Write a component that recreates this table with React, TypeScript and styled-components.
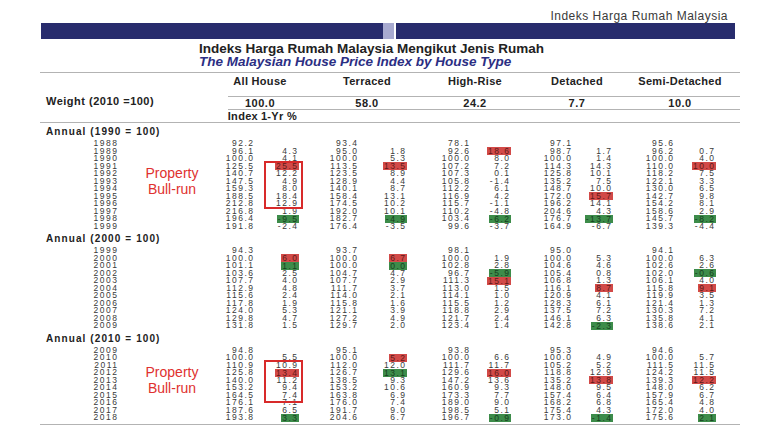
import React from 'react'
import styled, { createGlobalStyle } from 'styled-components'

const GlobalStyle = createGlobalStyle`
  * { box-sizing: border-box; }
  html, body { margin: 0; padding: 0; background: #fff; }
  body { font-family: "Liberation Sans", Arial, sans-serif; color: #2b2b2b; }
`

// data grid: year | (index, 1-yr %) x 5 | filler
const COLS = '77px 136px 44px 60px 48px 64px 40px 62px 40px 62px 41px 26px'
// header grid: label | one column per house type, centred over its pair
const HEAD_COLS = '167px 106px 108px 108px 96px 110px 5px'
const ROW_H = 7.5

const Page = styled.div`
  width: 760px;
  height: 428px;
  overflow: hidden;
  background: #fff;
`

const Caption = styled.div`
  padding: 10px 32px 0 0;
  height: 23px;
  line-height: 13px;
  text-align: right;
  font-size: 12px;
  letter-spacing: 0.5px;
  color: #3a3a3a;
`

const Banner = styled.div`
  display: flex;
  height: 16px;
  margin: 0 25px 0 41px;
`

const tones = { navy: '#282c6d', lilac: '#a8aad0', gap: '#ffffff' }

const BannerBlock = styled.div<{ $w?: number; $tone: keyof typeof tones }>`
  flex: ${p => (p.$w ? `0 0 ${p.$w}px` : '1')};
  background: ${p => tones[p.$tone]};
`

const TitleBlock = styled.div`
  padding: 3px 0 0 199px;
  line-height: 13px;
  font-size: 13.5px;
  font-weight: bold;
`

const Title = styled.div`
  color: #222;
`

const Subtitle = styled.div`
  font-style: italic;
  color: #2b2e83;
`

const Table = styled.div`
  margin: 4px 0 0 40px;
  width: 700px;
`

const Rule = styled.div<{ $indent?: number; $gap?: number }>`
  height: 1px;
  background: #b3b3b3;
  margin-left: ${p => p.$indent ?? 0}px;
  margin-top: ${p => p.$gap ?? 0}px;
`

const HeadGrid = styled.div<{ $h: number }>`
  display: grid;
  grid-template-columns: ${HEAD_COLS};
  height: ${p => p.$h}px;
  font-size: 11px;
  font-weight: bold;
  color: #222;
`

const HeadLabel = styled.div`
  padding-top: 2px;
  text-align: center;
  line-height: 13px;
  letter-spacing: 0.3px;
`

const WeightValue = styled.div`
  text-align: center;
  line-height: 12px;
  letter-spacing: 0.5px;
`

const WeightLabel = styled.div`
  padding-left: 6px;
  margin-top: -2px;
  line-height: 12px;
  letter-spacing: 0.5px;
`

const RowGrid = styled.div`
  display: grid;
  grid-template-columns: ${COLS};
  height: ${ROW_H}px;
`

const IndexRow = styled(RowGrid)`
  height: 12px;
  font-size: 11px;
  font-weight: bold;
  line-height: 12px;
  letter-spacing: 0.3px;
  color: #222;
`

const IndexLabel = styled.div<{ $shift?: number }>`
  text-align: right;
  margin-right: ${p => -(p.$shift ?? 0)}px;
  white-space: nowrap;
`

const SectionHead = styled.div`
  height: 17px;
  line-height: 17px;
  padding-left: 6px;
  font-size: 10px;
  font-weight: bold;
  letter-spacing: 1.1px;
  color: #222;
`

const SectionBody = styled.div`
  position: relative;
`

const Cell = styled.div`
  display: flex;
  justify-content: flex-end;
  align-items: center;
  height: ${ROW_H}px;
  margin-right: -1.5px;
  font-size: 8.5px;
  line-height: ${ROW_H}px;
  letter-spacing: 1.5px;
  color: #3a3a3a;
  white-space: nowrap;
`

const marks = {
  r: { bg: '#d24a48', fg: '#5e1a19' },
  g: { bg: '#3d8c4a', fg: '#173f1f' },
}

const Mark = styled.span<{ $tone: keyof typeof marks }>`
  display: inline-block;
  height: 8px;
  line-height: 8px;
  padding-left: 1px;
  background: ${p => marks[p.$tone].bg};
  color: ${p => marks[p.$tone].fg};
`

const BullBox = styled.div`
  position: absolute;
  left: 224px;
  width: 39px;
  border: 2px solid #d82a2a;
`

const BullNote = styled.div`
  position: absolute;
  left: 102px;
  width: 60px;
  text-align: center;
  font-size: 14px;
  line-height: 16px;
  color: #e0312f;
`

type Run = { from: number; rows: number; extra: number }

type SectionData = {
  title: string
  rows: string[]
  bull?: Run
}

const sections: SectionData[] = [
  {
    title: 'Annual (1990 = 100)',
    bull: { from: 3, rows: 6, extra: 1 },
    rows: [
      '1988 92.2 - 93.4 - 78.1 - 97.1 - 95.6 -',
      '1989 96.1 4.3 95.0 1.8 92.6 18.6r 98.7 1.7 96.2 0.7',
      '1990 100.0 4.1 100.0 5.3 100.0 8.0 100.0 1.4 100.0 4.0',
      '1991 125.5 25.5r 113.5 13.5r 107.2 7.2 114.3 14.3 110.0 10.0r',
      '1992 140.7 12.2 123.5 8.9 107.3 0.1 125.8 10.1 118.2 7.5',
      '1993 147.5 4.9 128.9 4.4 105.8 -1.4 135.2 7.5 122.1 3.3',
      '1994 159.3 8.0 140.1 8.7 112.2 6.1 148.7 10.0 130.0 6.5',
      '1995 188.5 18.4 158.4 13.1 116.9 4.2 172.0 15.7r 142.7 9.8',
      '1996 212.8 12.9 174.5 10.2 115.7 -1.1 196.2 14.1 154.2 8.1',
      '1997 216.8 1.9 192.0 10.1 110.2 -4.8 204.6 4.3 158.6 2.9',
      '1998 196.4 -9.5g 182.7 -4.9g 103.4 -6.2g 176.7 -13.7g 145.7 -8.2g',
      '1999 191.8 -2.4 176.4 -3.5 99.6 -3.7 164.9 -6.7 139.3 -4.4',
    ],
  },
  {
    title: 'Annual (2000 = 100)',
    rows: [
      '1999 94.3 - 93.7 - 98.1 - 95.0 - 94.1 -',
      '2000 100.0 6.0r 100.0 6.7r 100.0 1.9 100.0 5.3 100.0 6.3',
      '2001 101.1 1.1g 100.0 0.0g 102.8 2.8 104.6 4.6 102.6 2.6',
      '2002 103.6 2.5 104.7 4.7 96.7 -5.9g 105.4 0.8 102.0 -0.6g',
      '2003 107.7 4.0 107.7 2.9 111.3 15.1r 106.8 1.3 106.1 4.0',
      '2004 112.9 4.8 111.7 3.7 113.0 1.5 116.1 8.7r 115.8 9.1r',
      '2005 115.6 2.4 114.0 2.1 114.1 1.0 120.9 4.1 119.9 3.5',
      '2006 117.8 1.9 115.8 1.6 115.5 1.2 128.3 6.1 121.4 1.3',
      '2007 124.0 5.3 121.1 3.9 118.8 2.9 137.5 7.2 130.3 7.2',
      '2008 129.8 4.7 127.2 4.9 121.7 2.4 146.1 6.3 135.8 4.1',
      '2009 131.8 1.5 129.7 2.0 123.4 1.4 142.8 -2.3g 138.6 2.1',
    ],
  },
  {
    title: 'Annual (2010 = 100)',
    bull: { from: 2, rows: 5, extra: 3.5 },
    rows: [
      '2009 94.8 - 95.1 - 93.8 - 95.3 - 94.6 -',
      '2010 100.0 5.5 100.0 5.2r 100.0 6.6 100.0 4.9 100.0 5.7',
      '2011 110.9 10.9 112.0 12.0 111.7 11.7 105.2 5.2 111.5 11.5',
      '2012 125.8 13.4r 126.7 13.1g 129.6 16.0r 118.8 12.9 124.2 11.5',
      '2013 140.0 11.2 138.5 9.3 147.2 13.6 135.2 13.8r 139.3 12.2r',
      '2014 153.2 9.4 153.2 10.6 160.9 9.3 148.0 9.5 148.0 6.2',
      '2015 164.5 7.4 163.8 6.9 173.3 7.7 157.4 6.4 157.9 6.7',
      '2016 176.1 7.1 176.0 7.4 189.0 9.0 168.2 6.8 165.4 4.8',
      '2017 187.6 6.5 191.7 9.0 198.5 5.1 175.4 4.3 172.0 4.0',
      '2018 193.8 3.3g 204.6 6.7 196.7 -0.9g 173.0 -1.4g 175.6 2.1g',
    ],
  },
]

const houseTypes = [
  { name: 'All House', weight: '100.0' },
  { name: 'Terraced', weight: '58.0' },
  { name: 'High-Rise', weight: '24.2' },
  { name: 'Detached', weight: '7.7' },
  { name: 'Semi-Detached', weight: '10.0' },
]

const Value = ({ raw }: { raw: string }) => {
  if (raw === '-') return <Cell />
  const tone = raw.slice(-1)
  if (tone === 'r' || tone === 'g') {
    return (
      <Cell>
        <Mark $tone={tone}>{raw.slice(0, -1)}</Mark>
      </Cell>
    )
  }
  return <Cell>{raw}</Cell>
}

const Section = ({ title, rows, bull }: SectionData) => (
  <>
    <SectionHead>{title}</SectionHead>
    <SectionBody>
      {rows.map(line => (
        <RowGrid key={line}>
          {line.split(' ').map((raw, i) => (
            <Value key={i} raw={raw} />
          ))}
        </RowGrid>
      ))}
      {bull && (
        <>
          <BullNote style={{ top: (bull.from + 2.5) * ROW_H - 16 }}>
            Property
            <br />
            Bull-run
          </BullNote>
          <BullBox
            style={{
              top: bull.from * ROW_H - 2,
              height: bull.rows * ROW_H + 2 + bull.extra,
            }}
          />
        </>
      )}
    </SectionBody>
  </>
)

const App = () => {
  return (
    <>
      <GlobalStyle />
      <Page>
        <Caption>Indeks Harga Rumah Malaysia</Caption>
        <Banner>
          <BannerBlock $tone="navy" $w={342} />
          <BannerBlock $tone="lilac" $w={11} />
          <BannerBlock $tone="gap" $w={2} />
          <BannerBlock $tone="navy" />
        </Banner>
        <TitleBlock>
          <Title>Indeks Harga Rumah Malaysia Mengikut Jenis Rumah</Title>
          <Subtitle>The Malaysian House Price Index by House Type</Subtitle>
        </TitleBlock>

        <Table>
          <Rule />
          <HeadGrid $h={23}>
            <div />
            {houseTypes.map(t => (
              <HeadLabel key={t.name}>{t.name}</HeadLabel>
            ))}
          </HeadGrid>
          <Rule $indent={188} />
          <HeadGrid $h={12}>
            <WeightLabel>Weight (2010 =100)</WeightLabel>
            {houseTypes.map(t => (
              <WeightValue key={t.name}>{t.weight}</WeightValue>
            ))}
          </HeadGrid>
          <Rule $indent={188} />
          <IndexRow>
            <div />
            <IndexLabel $shift={5}>Index</IndexLabel>
            <IndexLabel>1-Yr %</IndexLabel>
          </IndexRow>
          <Rule />

          {sections.map(s => (
            <Section key={s.title} {...s} />
          ))}

          <Rule $gap={2.5} />
        </Table>
      </Page>
    </>
  )
}

export default App
